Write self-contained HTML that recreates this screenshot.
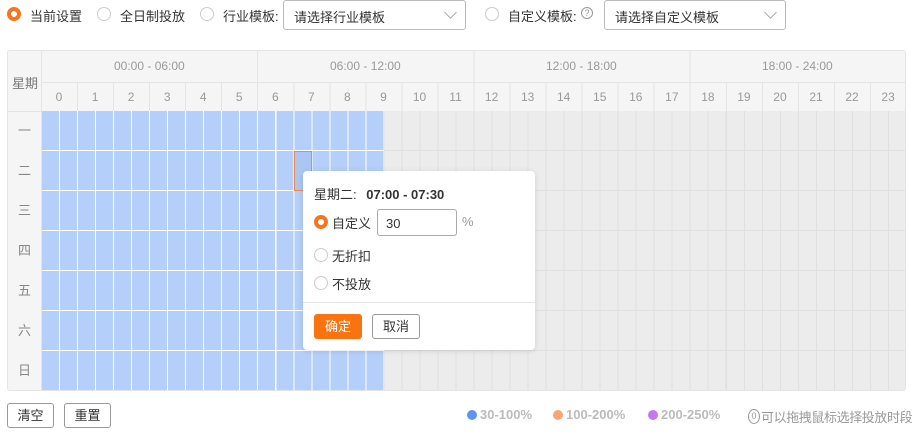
<!DOCTYPE html>
<html><head><meta charset="utf-8"><style>
*{box-sizing:border-box;margin:0;padding:0}
body{width:916px;height:436px;background:#fff;font-family:"Liberation Sans","Noto Sans CJK SC",sans-serif;font-size:13px;color:#333;position:relative;overflow:hidden}
.a{position:absolute}
.radio{position:absolute;width:14px;height:14px;border-radius:50%;border:1px solid #ccc;background:#fff}
.radio.on{border:4px solid #f5761f}
.sel{position:absolute;height:30px;border:1px solid #bbb;border-radius:3px;padding:6px 0 0 10px;color:#333}
.chev{position:absolute;right:10px;top:7px;width:9px;height:9px;border-right:1px solid #aaa;border-bottom:1px solid #aaa;transform:rotate(45deg)}
.t{position:absolute;white-space:nowrap}
.btn{position:absolute;border:1px solid #999;border-radius:3px;background:#fff;text-align:center;line-height:24px;font-size:13px}
.lg{position:absolute;display:flex;align-items:center;white-space:nowrap;font-size:13px;color:#bbb;font-weight:bold}
.dot{display:inline-block;width:10px;height:10px;border-radius:50%;margin-right:3px}
</style></head><body>
<div class="radio on" style="left:7px;top:7px"></div><div class="t" style="left:30px;top:6px">当前设置</div>
<div class="radio" style="left:97px;top:7px"></div><div class="t" style="left:120px;top:6px">全日制投放</div>
<div class="radio" style="left:200px;top:7px"></div><div class="t" style="left:223px;top:6px">行业模板:</div>
<div class="sel" style="left:283px;top:0;width:183px">请选择行业模板<div class="chev"></div></div>
<div class="radio" style="left:485px;top:7px"></div><div class="t" style="left:508px;top:6px">自定义模板:</div>
<div class="t" style="left:581px;top:7px;width:12px;height:12px;border:1px solid #999;border-radius:50%;font-size:9px;line-height:10px;text-align:center;color:#999">?</div>
<div class="sel" style="left:604px;top:0;width:182px">请选择自定义模板<div class="chev"></div></div>

<div class="a" style="left:7px;top:50px;width:899px;height:341px;border:1px solid #e4e4e4;border-radius:3px;background:#f5f5f5;overflow:hidden">
<div class="a" style="left:33px;top:0;width:1px;height:341px;background:#e4e4e4"></div>
<div class="a" style="left:34px;top:31px;width:865px;height:1px;background:#e4e4e4"></div>
<div class="a" style="left:0;top:60px;width:34px;height:1px;background:#e4e4e4"></div>
<div class="a" style="left:34px;top:32px;width:865px;height:29px;background:repeating-linear-gradient(90deg,transparent 0,transparent 35.04px,#e4e4e4 35.04px,#e4e4e4 36.04px)"></div>
<div class="a" style="left:34px;top:0;width:865px;height:32px;background:repeating-linear-gradient(90deg,transparent 0,transparent 215.2px,#e4e4e4 215.2px,#e4e4e4 216.2px)"></div>
<div class="a" style="left:34px;top:60px;width:865px;height:281px;background:repeating-linear-gradient(90deg,transparent 0,transparent 17px,#e0e0e0 17px,#e0e0e0 18.02px),repeating-linear-gradient(180deg,transparent 0,transparent 39px,#e0e0e0 39px,#e0e0e0 40px),#ececec"></div>
<div class="a" style="left:34px;top:60px;width:342px;height:281px;background:repeating-linear-gradient(90deg,transparent 0,transparent 17px,#fff 17px,#fff 18.02px),repeating-linear-gradient(180deg,transparent 0,transparent 39px,#fff 39px,#fff 40px),#b4cff9"></div>
</div>
<div class="t" style="left:12px;top:73px;color:#777">星期</div>
<div class="t" style="left:114px;top:59px;color:#999;font-size:12px">00:00 - 06:00</div>
<div class="t" style="left:330px;top:59px;color:#999;font-size:12px">06:00 - 12:00</div>
<div class="t" style="left:546px;top:59px;color:#999;font-size:12px">12:00 - 18:00</div>
<div class="t" style="left:762px;top:59px;color:#999;font-size:12px">18:00 - 24:00</div>
<div class="a" style="left:41px;top:90px;width:865px;display:flex;color:#999;font-size:12px">
<span style="flex:1;text-align:center">0</span><span style="flex:1;text-align:center">1</span><span style="flex:1;text-align:center">2</span><span style="flex:1;text-align:center">3</span><span style="flex:1;text-align:center">4</span><span style="flex:1;text-align:center">5</span><span style="flex:1;text-align:center">6</span><span style="flex:1;text-align:center">7</span><span style="flex:1;text-align:center">8</span><span style="flex:1;text-align:center">9</span><span style="flex:1;text-align:center">10</span><span style="flex:1;text-align:center">11</span><span style="flex:1;text-align:center">12</span><span style="flex:1;text-align:center">13</span><span style="flex:1;text-align:center">14</span><span style="flex:1;text-align:center">15</span><span style="flex:1;text-align:center">16</span><span style="flex:1;text-align:center">17</span><span style="flex:1;text-align:center">18</span><span style="flex:1;text-align:center">19</span><span style="flex:1;text-align:center">20</span><span style="flex:1;text-align:center">21</span><span style="flex:1;text-align:center">22</span><span style="flex:1;text-align:center">23</span></div>
<div class="a" style="left:8px;top:111px;width:33px;color:#888;text-align:center;line-height:40px">一<br>二<br>三<br>四<br>五<br>六<br>日</div>
<div class="a" style="left:294px;top:151px;width:18px;height:40px;border:1px solid #f08a4b;background:#a9c6f5"></div>

<div class="a" style="left:303px;top:171px;width:232px;height:179px;background:#fff;border-radius:4px;box-shadow:0 1px 6px rgba(0,0,0,.12)">
<div class="t" style="left:11px;top:13px">星期二: <b style="margin-left:6px">07:00 - 07:30</b></div>
<div class="radio on" style="left:11px;top:44px"></div><div class="t" style="left:29px;top:42px">自定义</div>
<div class="a" style="left:74px;top:38px;width:80px;height:27px;border:1px solid #aaa;border-radius:3px;padding:6px 0 0 8px">30</div>
<div class="t" style="left:159px;top:43px;color:#999">%</div>
<div class="radio" style="left:11px;top:77px"></div><div class="t" style="left:29px;top:75px">无折扣</div>
<div class="radio" style="left:11px;top:105px"></div><div class="t" style="left:29px;top:103px">不投放</div>
<div class="a" style="left:0;top:131px;width:232px;height:1px;background:#e4e4e4"></div>
<div class="btn" style="left:11px;top:143px;width:48px;height:25px;background:#f97410;border-color:#f97410;color:#fff">确定</div>
<div class="btn" style="left:69px;top:143px;width:48px;height:25px">取消</div>
</div>

<div class="btn" style="left:7px;top:403px;width:47px;height:25px">清空</div>
<div class="btn" style="left:64px;top:403px;width:47px;height:25px">重置</div>
<div class="lg" style="left:467px;top:407px"><span class="dot" style="background:#5b97f0"></span>30-100%</div>
<div class="lg" style="left:553px;top:407px"><span class="dot" style="background:#f9a57a"></span>100-200%</div>
<div class="lg" style="left:648px;top:407px"><span class="dot" style="background:#c677f2"></span>200-250%</div>
<div class="lg" style="left:748px;top:407px;color:#999;font-weight:normal;letter-spacing:-0.4px"><span style="display:inline-block;width:12px;height:15px;border:1px solid #999;border-radius:50%;font-size:9px;text-align:center;line-height:13px;margin-right:1px;letter-spacing:0">0</span>可以拖拽鼠标选择投放时段</div>
</body></html>
